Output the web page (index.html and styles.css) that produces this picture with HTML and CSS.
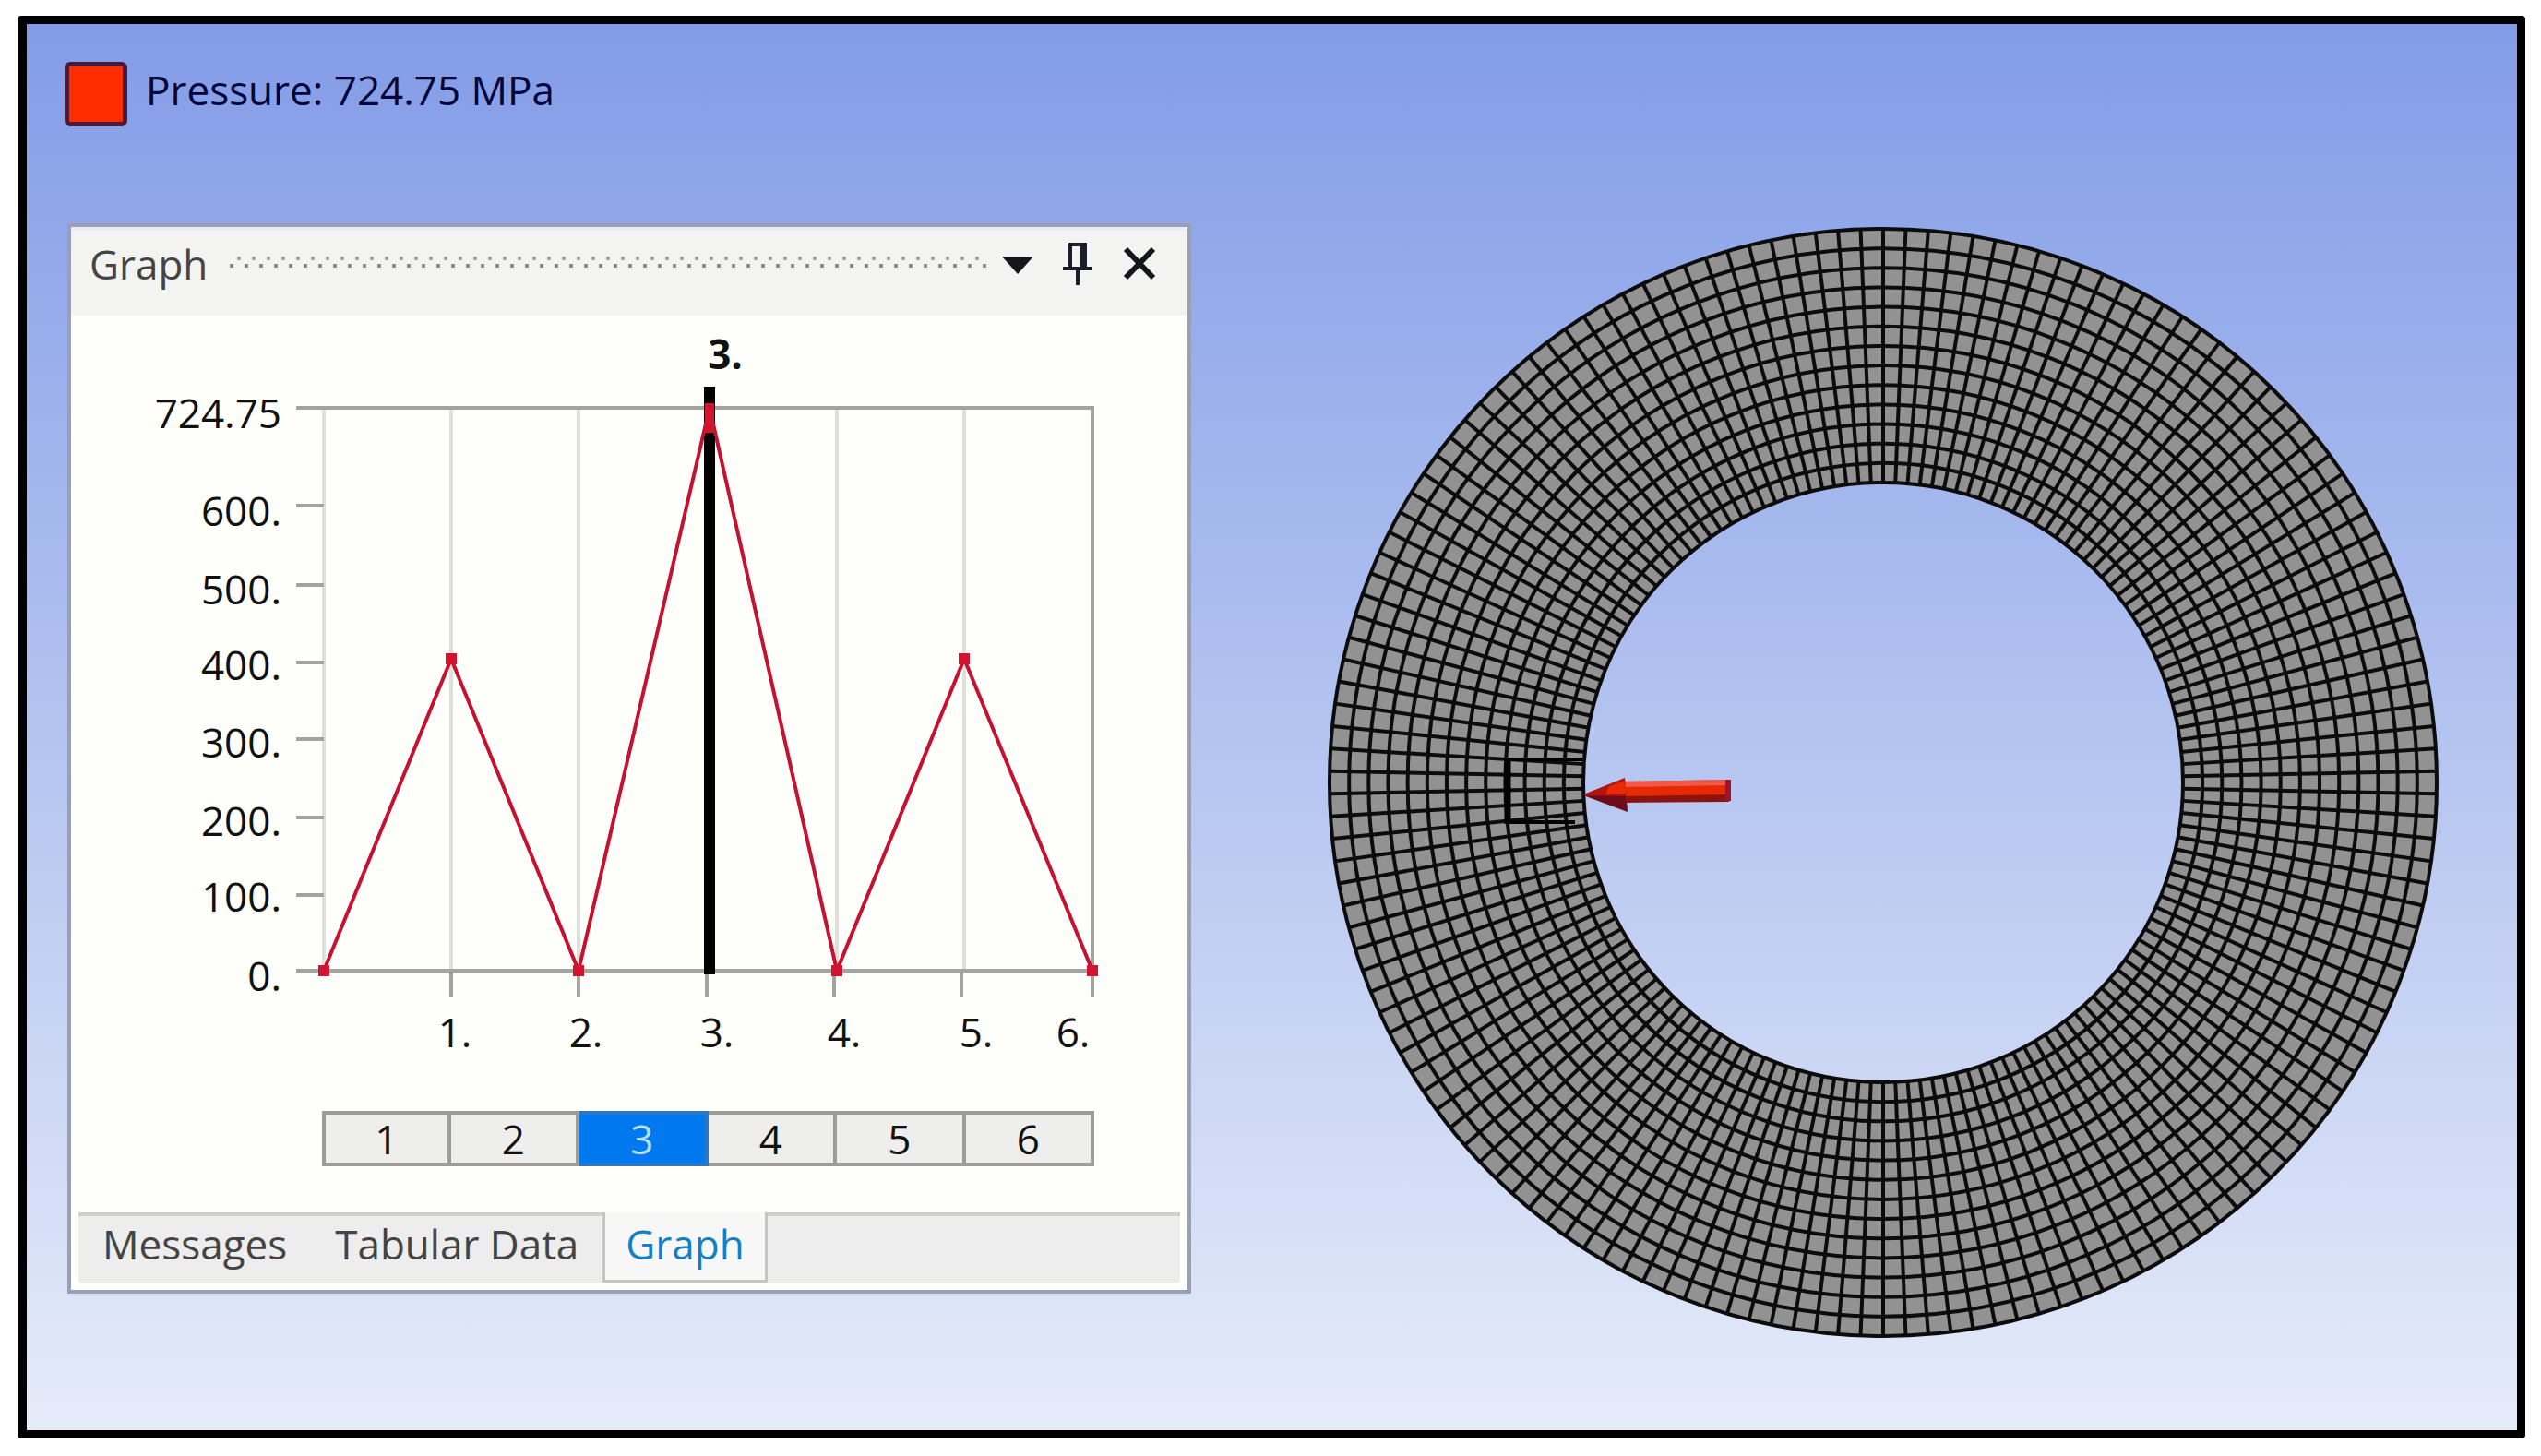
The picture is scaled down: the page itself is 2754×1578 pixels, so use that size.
FILE: index.html
```html
<!DOCTYPE html>
<html lang="en">
<head>
<meta charset="utf-8">
<title>Pressure load</title>
<link rel="stylesheet" href="styles.css">
</head>
<body>
<main class="viewport">
  <header class="legend">
    <span class="legend-swatch"></span>
    <span class="legend-text">Pressure: 724.75 MPa</span>
  </header>

  <section class="panel" aria-label="Graph panel">
    <div class="panel-bar">
      <h1 class="panel-title">Graph</h1>
      <svg class="grip" aria-hidden="true">
        <defs>
          <pattern id="dots" width="16" height="18" patternUnits="userSpaceOnUse">
            <rect x="0" y="9" width="4" height="4" fill="#8c8c94"/>
            <rect x="8" y="1" width="4" height="4" fill="#a4a4aa"/>
          </pattern>
        </defs>
        <rect width="100%" height="18" fill="url(#dots)"/>
      </svg>
      <div class="panel-tools">
        <button class="tool" aria-label="Menu"><svg viewBox="0 0 36 48"><path d="M1 16h34L18 35z" fill="#15171c"/></svg></button>
        <button class="tool" aria-label="Pin"><svg viewBox="0 0 36 48"><path d="M9 29V3h16v26M1 29h32M17 29v18" fill="none" stroke="#1c1c2c" stroke-width="4"/><path d="M23 3v26" stroke="#1c1c2c" stroke-width="7"/></svg></button>
        <button class="tool" aria-label="Close"><svg viewBox="0 0 36 48"><path d="M3 8l30 31M33 8L3 39" fill="none" stroke="#15171c" stroke-width="6"/></svg></button>
      </div>
    </div>

    <svg class="chart" viewBox="77 342 1210 838" role="img" aria-label="Pressure by load step">
      <path class="gridline" d="M351 442V1052M489 442V1052M627 442V1052M769 442V1052M907 442V1052M1045 442V1052"/>
      <path class="axis" d="M321 442H1184V1080M321 1052H1184M321 548H351M321 634H351M321 718H351M321 801H351M321 886H351M321 970H351M489 1052V1080M627 1052V1080M766 1052V1080M904 1052V1080M1042 1052V1080"/>
      <g class="label label-y">
        <text x="305" y="464">724.75</text>
        <text x="305" y="570">600.</text>
        <text x="305" y="655">500.</text>
        <text x="305" y="737">400.</text>
        <text x="305" y="821">300.</text>
        <text x="305" y="906">200.</text>
        <text x="305" y="988">100.</text>
        <text x="305" y="1074">0.</text>
      </g>
      <g class="label label-x">
        <text x="493" y="1135">1.</text>
        <text x="635" y="1135">2.</text>
        <text x="777" y="1135">3.</text>
        <text x="915" y="1135">4.</text>
        <text x="1058" y="1135">5.</text>
        <text x="1163" y="1135">6.</text>
        <text class="label-current" x="786" y="400">3.</text>
      </g>
      <path class="cursor" d="M769 419V1056"/>
      <path class="series" d="M351 1052L489 714L627 1052L769 442L907 1052L1045 714L1184 1052"/>
      <path class="cursor" d="M769 472V1056"/>
      <path class="markers" d="M345 1046h12v12h-12zM483 708h12v12h-12zM621 1046h12v12h-12zM764 437h10v32h-10zM901 1046h12v12h-12zM1039 708h12v12h-12zM1178 1046h12v12h-12z"/>
    </svg>

    <div class="steps">
      <button class="step">1</button>
      <button class="step">2</button>
      <button class="step step-selected" aria-pressed="true">3</button>
      <button class="step">4</button>
      <button class="step">5</button>
      <button class="step">6</button>
    </div>

    <nav class="tabs">
      <button class="tab">Messages</button>
      <button class="tab">Tabular Data</button>
      <button class="tab tab-active" aria-current="true">Graph</button>
    </nav>
  </section>

  <svg class="model" viewBox="0 0 1206 1208" role="img" aria-label="Meshed ring with a pressure arrow">
    <circle cx="602" cy="606" r="462" fill="none" stroke="#929292" stroke-width="275"/>
    <g id="mesh" class="mesh"></g>
    <path d="M195 580V651" stroke="#000" stroke-width="7"/>
    <path d="M195 581H276M195 649H268" fill="none" stroke="#000" stroke-width="4"/>
    <path d="M319 605L435 603V625L319 627z" fill="#e62a05"/>
    <path d="M319 605L435 603V609L319 611z" fill="#f0584a"/>
    <path d="M319 621L435 619V627L319 628z" fill="#8c1410"/>
    <path d="M431 603h6v23h-6z" fill="#a01428"/>
    <path d="M277 619L322 601L325 637z" fill="#b41410"/>
    <path d="M277 620L323 621L325 638z" fill="#6c0c18"/>
    <path d="M305 610L323 604V618L301 619z" fill="#e62a05"/>
  </svg>
</main>
<script src="mesh.js"></script>
</body>
</html>
```
FILE: styles.css
```css
* {
  box-sizing: border-box;
}

body {
  margin: 0;
  background: #fff;
  font-family: "Open Sans", "Noto Sans", sans-serif;
  font-size: 44px;
  line-height: 60px;
}

button {
  margin: 0;
  padding: 0;
  border: 0;
  background: none;
  color: inherit;
  font: inherit;
}

.viewport {
  display: grid;
  grid-template-columns: 1218fr 1206fr;
  grid-template-rows: auto 1fr;
  column-gap: 148px;
  align-items: start;
  min-height: calc(100vh - 36px);
  margin: 17px 17px 19px 19px;
  padding: 41px 83px 40px 44px;
  border: 9px solid #000;
  border-left-width: 10px;
  border-radius: 4px;
  background: linear-gradient(#829ce7, #e5ebf9);
}

.legend {
  grid-column: 1 / -1;
  display: flex;
  align-items: flex-start;
  gap: 20px;
  height: 70px;
  margin-bottom: 105px;
  color: #02063a;
}

.legend-swatch {
  width: 68px;
  height: 70px;
  margin-left: -3px;
  border: 5px solid #4a1a3a;
  border-radius: 6px;
  background: #ff2d00;
}

.panel {
  padding-bottom: 8px;
  border: 4px solid #9a9fb6;
  background: #fefffb;
}

.panel-bar {
  display: flex;
  align-items: center;
  height: 96px;
  padding: 0 34px 20px 20px;
  border-top: 4px solid #e8eef8;
  background: #f3f3f2;
  color: #444;
}

.panel-title {
  margin: 0;
  font-size: 44px;
  font-weight: 400;
}

.grip {
  flex: 1;
  height: 18px;
  margin: 0 12px 0 24px;
}

.panel-tools {
  display: flex;
  gap: 30px;
}

.tool {
  width: 36px;
  height: 48px;
}

.tool svg,
.chart,
.model {
  display: block;
  width: 100%;
}

.gridline {
  fill: none;
  stroke: #dfdfdc;
  stroke-width: 4;
}

.axis {
  fill: none;
  stroke: #a3a3a0;
  stroke-width: 4;
}

.label {
  fill: #111;
  font-size: 44px;
}

.label-y {
  text-anchor: end;
}

.label-x {
  text-anchor: middle;
}

.label-current {
  font-weight: 700;
}

.cursor {
  fill: none;
  stroke: #000;
  stroke-width: 12;
}

.series {
  fill: none;
  stroke: #c41230;
  stroke-width: 4;
}

.markers {
  fill: #d3142f;
}

.steps {
  display: grid;
  grid-template-columns: repeat(6, 1fr);
  margin: 24px 8% 50px 22%;
  padding: 0 4px 0 6px;
}

.step {
  height: 60px;
  border: 4px solid #9c9c99;
  border-left-width: 0;
  background: #eeeeed;
  color: #111;
  line-height: 52px;
}

.step:first-child {
  border-left-width: 4px;
}

.step-selected {
  border-color: #2a78c4;
  background: #0078f0;
  color: #b4e0ff;
}

.tabs {
  display: flex;
  height: 76px;
  margin: 0 8px;
  border-top: 4px solid #cfcfcc;
  background: #ededed;
  color: #444;
}

.tab {
  padding: 0 26px 12px;
  line-height: 60px;
}

.tab-active {
  height: 76px;
  margin-top: -4px;
  padding: 4px 22px 12px;
  border: 3px solid #c4c4c4;
  border-top: 0;
  background: #f7f7f7;
  color: #1480c4;
}

.mesh {
  fill: none;
  stroke: #0c0c0c;
  stroke-width: 4;
}
```
FILE: mesh.js
```js
// Draws the ring's finite-element mesh: concentric rows and radial spokes.
const SVG = "http://www.w3.org/2000/svg";
const centre = { x: 602, y: 606 };
const inner = 325;
const outer = 600;
const rows = 13;
const spokes = 154;
const mesh = document.getElementById("mesh");

for (let i = 0; i <= rows; i++) {
  const ring = document.createElementNS(SVG, "circle");
  ring.setAttribute("cx", centre.x);
  ring.setAttribute("cy", centre.y);
  ring.setAttribute("r", inner + (outer - inner) * i / rows);
  mesh.append(ring);
}

let d = "";
for (let i = 0; i < spokes; i++) {
  const a = 2 * Math.PI * i / spokes - Math.PI / 2;
  const c = Math.cos(a);
  const s = Math.sin(a);
  d += `M${centre.x + inner * c} ${centre.y + inner * s}L${centre.x + outer * c} ${centre.y + outer * s}`;
}
const lines = document.createElementNS(SVG, "path");
lines.setAttribute("d", d);
mesh.append(lines);
```
